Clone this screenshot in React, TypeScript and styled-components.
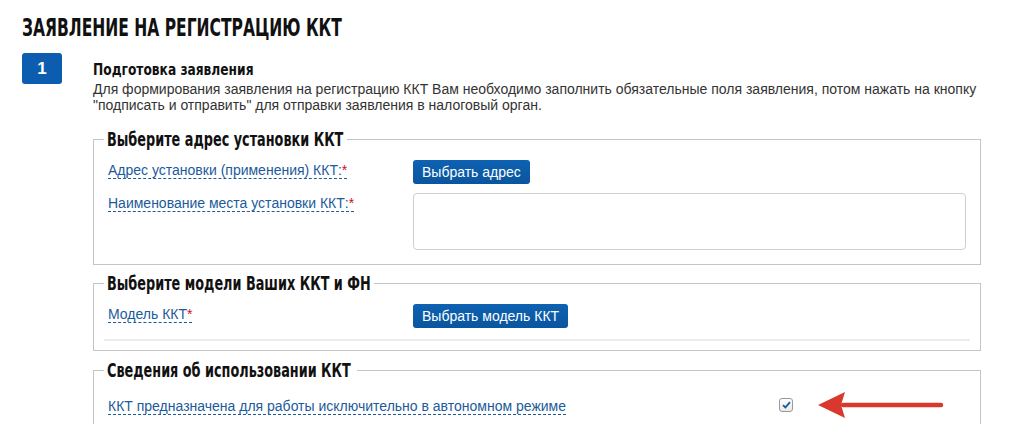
import React from 'react';
import styled, { createGlobalStyle } from 'styled-components';

const GlobalStyle = createGlobalStyle`
  html, body {
    margin: 0;
    background: #fff;
    overflow: hidden;
  }

  body {
    font-family: "Liberation Sans", Arial, sans-serif;
    color: #333;
  }
`;

const condensed = `"DejaVu Sans Condensed", "Liberation Sans", sans-serif`;

// DIN-like narrow heading, squeezed from DejaVu Sans Condensed
const Narrow = styled.span<{ $scale: number }>`
  display: inline-block;
  white-space: nowrap;
  transform: scaleX(${(p) => p.$scale});
  transform-origin: left center;
`;

const Page = styled.div`
  padding: 13px 0 0 22px;
  width: 959px;
`;

const Title = styled.h1`
  margin: 0;
  font-family: ${condensed};
  font-weight: bold;
  font-size: 25px;
  line-height: 30px;
  color: #111;
  text-transform: uppercase;
`;

const Step = styled.section`
  display: grid;
  grid-template-columns: 40px 888px;
  column-gap: 31px;
  margin-top: 10px;
`;

const Badge = styled.div`
  width: 40px;
  height: 31px;
  border-radius: 3px;
  background: #0c5db0;
  color: #fff;
  font-weight: bold;
  font-size: 17px;
  display: flex;
  align-items: center;
  justify-content: center;
`;

const StepBody = styled.div`
  padding-top: 7px;
`;

const StepTitle = styled.h2`
  margin: 0;
  font-family: ${condensed};
  font-weight: bold;
  font-size: 16px;
  line-height: 20px;
  color: #111;
`;

const Description = styled.p`
  margin: 1px 0 0;
  font-size: 14px;
  line-height: 16px;
  color: #333;
`;

const Fieldset = styled.fieldset<{ $gap: number; $bottom: number }>`
  margin: ${(p) => p.$gap}px 0 0;
  min-width: 0;
  border: 1px solid #c4c4c4;
  padding: 10px 14px ${(p) => p.$bottom}px;
`;

const Legend = styled.legend<{ $w: number }>`
  width: ${(p) => p.$w}px;
  margin-left: -4px;
  padding: 0 3px;
  box-sizing: border-box;
  font-family: ${condensed};
  font-weight: bold;
  font-size: 19px;
  line-height: 22px;
  color: #111;
`;

const FormGrid = styled.div`
  display: grid;
  grid-template-columns: 305px 1fr;
  row-gap: 9px;
  align-items: start;
`;

const Label = styled.span`
  justify-self: start;
  font-size: 14px;
  line-height: 16px;
  color: #1c5a9b;
  border-bottom: 1px dashed #1c5a9b;
  margin-top: 2px;
`;

const Star = styled.span`
  color: #c8102e;
`;

const Button = styled.button`
  justify-self: start;
  height: 24px;
  padding: 0 9px;
  border: none;
  border-radius: 3px;
  background: linear-gradient(#0d62b1, #0a559f);
  color: #fff;
  font-family: "Liberation Sans", Arial, sans-serif;
  font-size: 14px;
`;

const TextArea = styled.textarea`
  width: 553px;
  height: 57px;
  box-sizing: border-box;
  border: 1px solid #cfcfcf;
  border-radius: 4px;
  resize: none;
  margin: 0;
`;

const Separator = styled.div`
  height: 2px;
  margin: 11px -4px 0;
  background: #ececec;
`;

const CheckRow = styled.div`
  display: grid;
  grid-template-columns: 647px 14px auto;
  column-gap: 24px;
  align-items: center;
  padding-bottom: 40px;
`;

const CheckBox = styled.span`
  width: 14px;
  height: 14px;
  box-sizing: border-box;
  border: 1px solid #9a9a9a;
  border-radius: 3px;
  background: linear-gradient(#fdfdfd, #e9e9e9);
  display: flex;
  align-items: center;
  justify-content: center;
`;

const Arrow = () => (
  <svg width="127" height="28" viewBox="0 0 127 28">
    <path d="M26 14 H124" stroke="#d9392d" strokeWidth="4.5" strokeLinecap="round" />
    <path d="M1 14 L28 1 L24 14 L28 27 Z" fill="#d9392d" />
  </svg>
);

const App = () => {
  return (
    <Page>
      <GlobalStyle />
      <Title>
        <Narrow $scale={0.69}>Заявление на регистрацию ККТ</Narrow>
      </Title>
      <Step>
        <Badge>1</Badge>
        <StepBody>
          <StepTitle>
            <Narrow $scale={0.85}>Подготовка заявления</Narrow>
          </StepTitle>
          <Description>
            Для формирования заявления на регистрацию ККТ Вам необходимо заполнить обязательные поля заявления, потом нажать на кнопку "подписать и отправить" для отправки заявления в налоговый орган.
          </Description>

          <Fieldset $gap={15} $bottom={14}>
            <Legend $w={243}>
              <Narrow $scale={0.75}>Выберите адрес установки ККТ</Narrow>
            </Legend>
            <FormGrid>
              <Label>Адрес установки (применения) ККТ:<Star>*</Star></Label>
              <Button>Выбрать адрес</Button>
              <Label>Наименование места установки ККТ:<Star>*</Star></Label>
              <TextArea />
            </FormGrid>
          </Fieldset>

          <Fieldset $gap={7} $bottom={9}>
            <Legend $w={270}>
              <Narrow $scale={0.75}>Выберите модели Ваших ККТ и ФН</Narrow>
            </Legend>
            <FormGrid>
              <Label>Модель ККТ<Star>*</Star></Label>
              <Button>Выбрать модель ККТ</Button>
            </FormGrid>
            <Separator />
          </Fieldset>

          <Fieldset $gap={8} $bottom={0}>
            <Legend $w={253}>
              <Narrow $scale={0.75}>Сведения об использовании ККТ</Narrow>
            </Legend>
            <CheckRow>
              <Label>ККТ предназначена для работы исключительно в автономном режиме</Label>
              <CheckBox>
                <svg width="9" height="8" viewBox="0 0 9 8">
                  <path d="M1 4.2 L3.4 6.4 L8 1.2" fill="none" stroke="#1c5a9b" strokeWidth="1.8" />
                </svg>
              </CheckBox>
              <Arrow />
            </CheckRow>
          </Fieldset>
        </StepBody>
      </Step>
    </Page>
  );
};

export default App;
